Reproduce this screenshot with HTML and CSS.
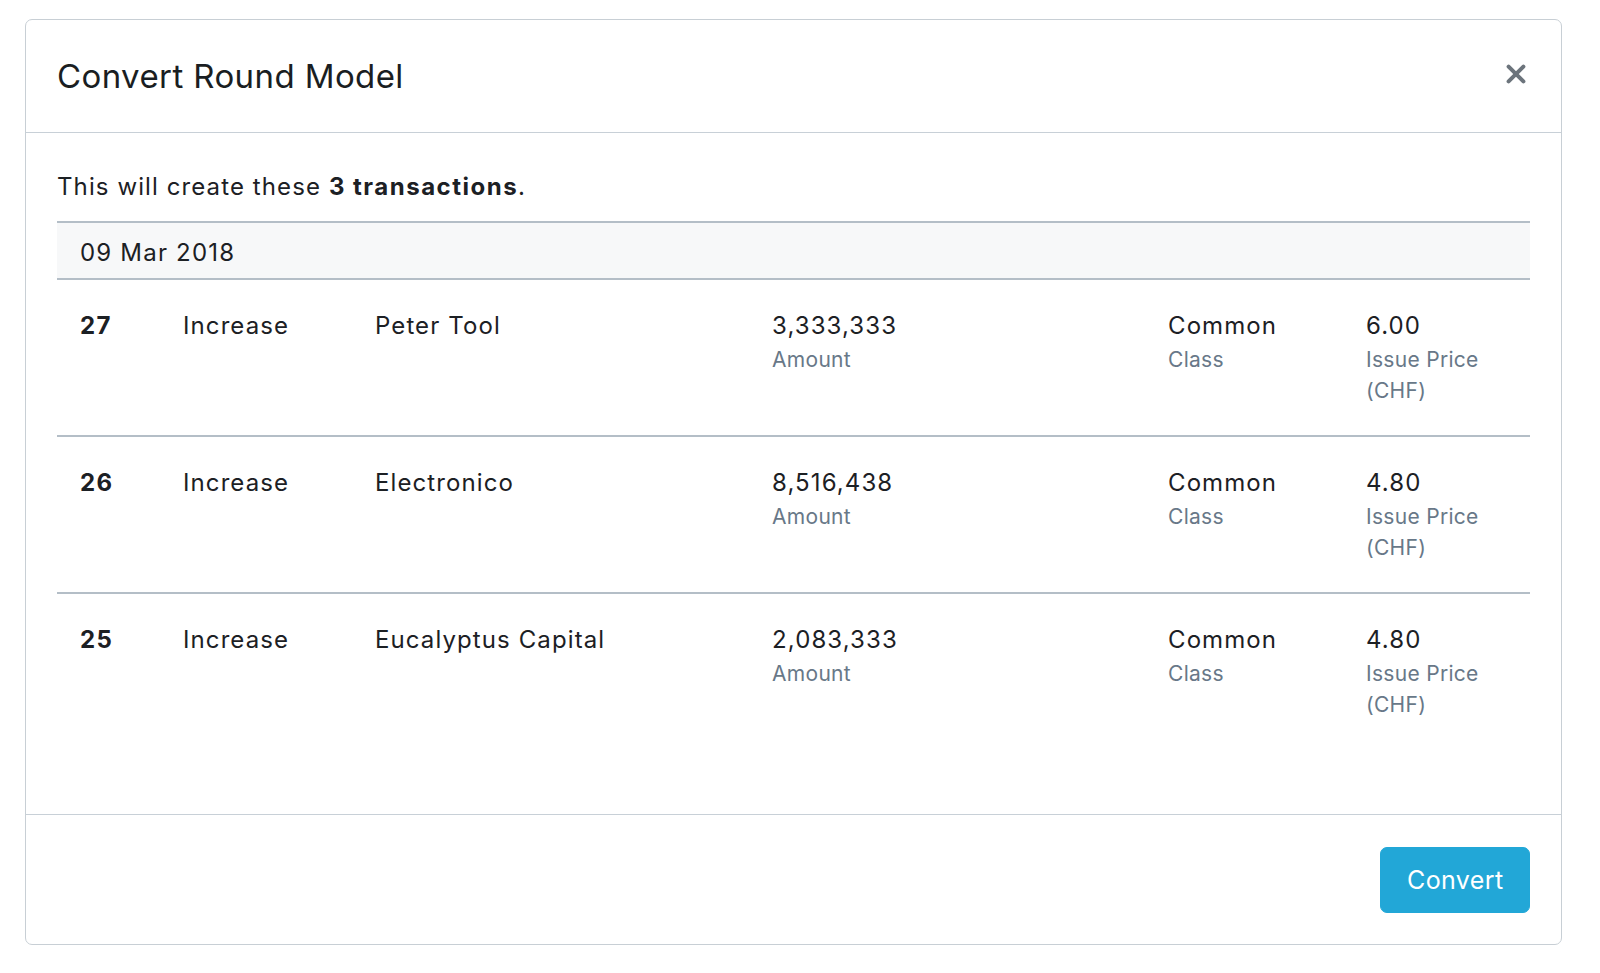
FILE: index.html
```html
<!DOCTYPE html>
<html lang="en">
<head>
<meta charset="utf-8">
<title>Convert Round Model</title>
<link rel="stylesheet" href="styles.css">
</head>
<body>
<div class="modal">
  <div class="modal-header">
    <h1 class="modal-title">Convert Round Model</h1>
    <button class="close" aria-label="Close">
      <svg width="20" height="20" viewBox="0 0 20 20"><path d="M2.6 2.6 L17.4 17.4 M17.4 2.6 L2.6 17.4" stroke="#6c747c" stroke-width="4" stroke-linecap="round" fill="none"/></svg>
    </button>
  </div>
  <div class="modal-body">
    <p class="intro">This will create these <strong>3 transactions</strong>.</p>
    <div class="tx-table">
      <div class="date-row">09 Mar 2018</div>
      <div class="tx-row">
        <div class="cell num">27</div>
        <div class="cell">Increase</div>
        <div class="cell">Peter Tool</div>
        <div class="cell"><div class="val">3,333,333</div><div class="lbl">Amount</div></div>
        <div class="cell"><div class="val">Common</div><div class="lbl">Class</div></div>
        <div class="cell"><div class="val">6.00</div><div class="lbl">Issue Price (CHF)</div></div>
      </div>
      <div class="tx-row">
        <div class="cell num">26</div>
        <div class="cell">Increase</div>
        <div class="cell">Electronico</div>
        <div class="cell"><div class="val">8,516,438</div><div class="lbl">Amount</div></div>
        <div class="cell"><div class="val">Common</div><div class="lbl">Class</div></div>
        <div class="cell"><div class="val">4.80</div><div class="lbl">Issue Price (CHF)</div></div>
      </div>
      <div class="tx-row last">
        <div class="cell num">25</div>
        <div class="cell">Increase</div>
        <div class="cell">Eucalyptus Capital</div>
        <div class="cell"><div class="val">2,083,333</div><div class="lbl">Amount</div></div>
        <div class="cell"><div class="val">Common</div><div class="lbl">Class</div></div>
        <div class="cell"><div class="val">4.80</div><div class="lbl">Issue Price (CHF)</div></div>
      </div>
    </div>
  </div>
  <div class="modal-footer">
    <button class="btn-primary">Convert</button>
  </div>
</div>
</body>
</html>
```

FILE: styles.css
```css
* { box-sizing: border-box; }

html, body {
  margin: 0;
  padding: 0;
  background: #ffffff;
}

body {
  font-family: Inter, "Noto Sans", "Liberation Sans", sans-serif;
  color: #1c2024;
  padding: 19px 0 0 25px;
}

.modal {
  width: 1537px;
  height: 926px;
  border: 1px solid #c8cfd5;
  border-radius: 7px;
  display: flex;
  flex-direction: column;
  background: #fff;
}

.modal-header {
  display: flex;
  align-items: center;
  justify-content: space-between;
  padding: 32px 35px 32px 31px;
  border-bottom: 1px solid #c8d0d7;
}

.modal-title {
  margin: 0;
  font-size: 33px;
  line-height: 48px;
  font-weight: 400;
  color: #1a1e22;
  letter-spacing: 0.4px;
}

.close {
  border: 0;
  background: none;
  padding: 0;
  width: 20px;
  height: 20px;
  display: flex;
  margin-top: -4px;
}

.modal-body {
  flex: 1;
  padding: 36px 31px 0;
}

.intro {
  margin: 0 0 16px;
  font-size: 24px;
  line-height: 36px;
  letter-spacing: 1.1px;
}

.intro strong {
  font-weight: 700;
  letter-spacing: 1.5px;
}

.tx-table {
  border-top: 2px solid #b4bec7;
}

.date-row {
  background: #f7f8f9;
  padding: 12px 23px 7px;
  font-size: 24px;
  line-height: 36px;
  letter-spacing: 1.2px;
  border-bottom: 2px solid #b4bec7;
}

.tx-row {
  display: grid;
  grid-template-columns: 103px 192px 397px 396px 198px 1fr;
  padding: 28px 0 29px;
  border-bottom: 2px solid #b4bec7;
  font-size: 24px;
  line-height: 36px;
  letter-spacing: 1.1px;
}

.tx-row.last { border-bottom: 0; }

.cell {
  padding: 0 23px;
}

.num {
  font-weight: 700;
  letter-spacing: 1.3px;
}

.val {
  font-size: 24px;
  line-height: 36px;
}

.lbl {
  font-size: 21px;
  line-height: 31px;
  color: #687888;
  letter-spacing: 0.3px;
}

.modal-footer {
  display: flex;
  justify-content: flex-end;
  padding: 32px 31px 31px;
  border-top: 1px solid #c8d0d7;
}

.btn-primary {
  font-family: Inter, "Noto Sans", "Liberation Sans", sans-serif;
  background: #22a7d7;
  color: #fff;
  border: 1px solid #22a7d7;
  border-radius: 7px;
  font-size: 25px;
  line-height: 36px;
  padding: 14px 26px;
  width: 150px;
  letter-spacing: 0.4px;
}
```
